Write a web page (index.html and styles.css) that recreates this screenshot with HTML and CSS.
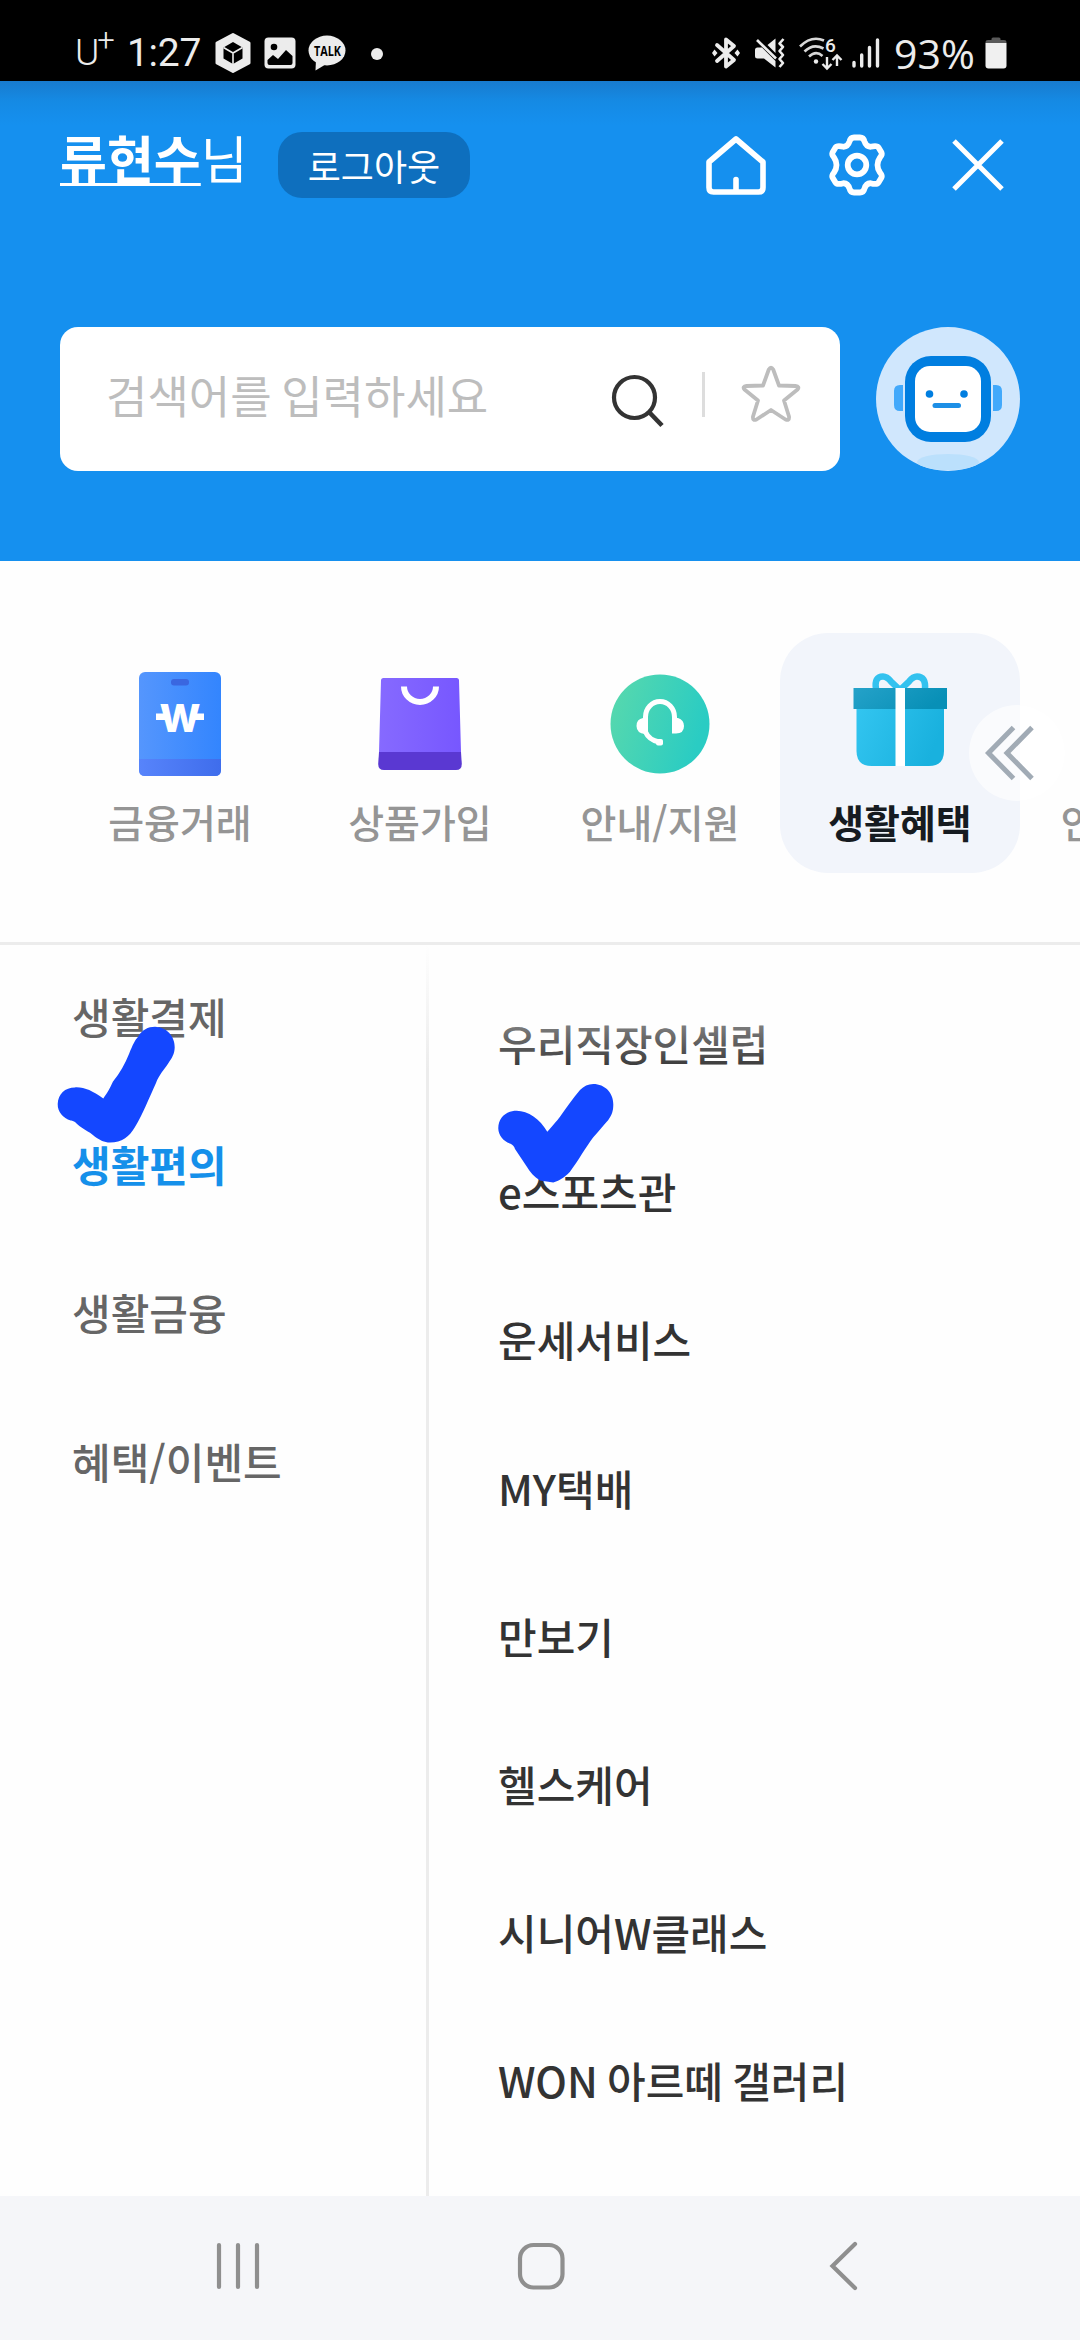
FILE: index.html
```html
<!DOCTYPE html>
<html lang="ko">
<head>
<meta charset="utf-8">
<title>전체메뉴</title>
<link rel="stylesheet" href="styles.css">
</head>
<body>
<div class="screen">
  <div class="status">
    <div class="status-left">
      <span class="carrier">U<span class="plus">+</span></span>
      <span class="time">1:27</span>
      <svg class="st-hex" width="36" height="40" viewBox="0 0 36 40"><path d="M18 1.5 34 10V30L18 38.500 2 30V10Z" fill="#ececec" stroke="#ececec" stroke-width="3" stroke-linejoin="round"/><path d="M18 9 27.500 14.500V25.500L18 31 8.500 25.500V14.500Z"/><path d="M8.500 14.500 18 20 27.500 14.500M18 20V31" stroke="#ececec" stroke-width="1.600" fill="none"/></svg>
      <svg class="st-img" width="32" height="32" viewBox="0 0 32 32"><rect x=".5" y=".5" width="31" height="31" rx="4" fill="#ececec"/><circle cx="10" cy="10" r="3.300"/><path d="M3.500 23 9 18 14 22 22 13 28.500 19V26Q28.500 28 26.500 28H5.500Q3.500 28 3.500 26Z"/></svg>
      <svg class="st-talk" width="38" height="36" viewBox="0 0 38 36"><ellipse cx="19" cy="15.500" rx="18.500" ry="15" fill="#ececec"/><path d="M8 24 7.500 35.500 20 28Z" fill="#ececec"/><text x="6" y="20.500" textLength="27" lengthAdjust="spacingAndGlyphs" class="talk-text">TALK</text></svg>
      <span class="st-dot"></span>
    </div>
    <div class="status-right">
      <svg class="st-bt" width="28" height="32" viewBox="0 0 28 32"><path d="M5 8 22 23 14 29.500V2.500L22 9 5 24" fill="none" stroke="#ececec" stroke-width="3.800" stroke-linejoin="round" stroke-linecap="round"/><path d="M0 16 2.500 12.500 5.500 16 2.500 19.500ZM28 16 25.500 12.500 22.500 16 25.500 19.500Z" fill="#ececec"/></svg>
      <svg class="st-mute" width="30" height="32" viewBox="0 0 30 32"><path d="M0 13Q0 10.500 2.500 10.500H7L20.500 24V30.500L9 21.500H2.500Q0 21.500 0 19ZM12.500 8 20.500 1.500V16Z" fill="#ececec"/><path d="M2 3 21 21.500" stroke="#ececec" stroke-width="2.600"/><path d="M28.500 2 24.500 6.500 28 10 24.500 14 28 18 24.500 22 28 26 24.500 30" fill="none" stroke="#ececec" stroke-width="2.600" stroke-linejoin="round"/></svg>
      <svg class="st-wifi" width="44" height="34" viewBox="0 0 44 34"><g fill="none" stroke="#d8d8d8" stroke-width="2.600"><path d="M1 10.500Q12.500-1 25 4.500"/><path d="M5.500 15.500Q14 7 24.500 12.500"/><path d="M10 20.500Q17 14 23.500 20"/></g><circle cx="17" cy="25.500" r="2.200" fill="#ececec"/><text x="26" y="16" class="wifi-gen">6</text><path d="M28 21V32M23.500 28 28 32.500 32.500 28M38 30V19.500M33.500 24 38 19.500 42.500 24" fill="none" stroke="#ececec" stroke-width="2.400"/></svg>
      <svg class="st-sig" width="28" height="30" viewBox="0 0 28 30"><path d="M2 24.500V28M9.700 17V28M17.500 9.500V28M25.500 2V28" stroke="#ececec" stroke-width="3.400" stroke-linecap="round"/></svg>
      <span class="percent">93%</span>
      <svg class="st-bat" width="22" height="32" viewBox="0 0 22 32"><path d="M.5 6V5Q.5 3 3 3H6.500V2Q6.500 .5 8 .5H14Q15.500 .5 15.500 2V3H19Q21.500 3 21.500 5V6Z" fill="#5a5a5a"/><path d="M.5 6H21.500V28.500Q21.500 31.500 18.500 31.500H3.500Q.5 31.500 .5 28.500Z" fill="#f0f0f0"/></svg>
    </div>
  </div>

  <header class="header">
    <div class="user-row">
      <div class="user"><b>류현수</b>님</div>
      <button class="logout">로그아웃</button>
      <div class="actions">
        <svg width="60" height="60" viewBox="0 0 60 60"><path d="M30 4 3 27V52.500Q3 57 7.500 57H52.500Q57 57 57 52.500V27ZM30 57V44.500" fill="none" stroke="#fff" stroke-width="5.600" stroke-linejoin="round" stroke-linecap="round"/></svg>
        <svg class="ic-gear" width="58" height="62" viewBox="-29 -31 58 62"><g fill="none" stroke="#fff" stroke-width="5.800"><path stroke-linejoin="round" d="M-3-27.500H3Q6.500-27.500 7.500-23.500Q9-18.500 13.500-18.200Q20-20 21.500-17.500L24.500-12.500Q25.500-10.500 23-7.500Q20.500-4 20.500 0Q20.500 4 23 7.500Q25.500 10.500 24.500 12.500L21.500 17.500Q20 20 13.500 18.200Q9 18.500 7.500 23.500Q6.500 27.500 3 27.500H-3Q-6.500 27.500-7.500 23.500Q-9 18.500-13.500 18.200Q-20 20-21.500 17.500L-24.500 12.500Q-25.500 10.500-23 7.500Q-20.500 4-20.500 0Q-20.500-4-23-7.500Q-25.500-10.500-24.500-12.500L-21.500-17.500Q-20-20-13.500-18.200Q-9-18.500-7.500-23.500Q-6.500-27.500-3-27.500Z"/><circle r="9.300"/></g></svg>
        <svg width="52" height="52" viewBox="0 0 52 52"><path d="M2 2 50 50M50 2 2 50" stroke="#fff" stroke-width="5"/></svg>
      </div>
    </div>
    <div class="search-row">
      <div class="search">
        <span class="placeholder">검색어를 입력하세요</span>
        <svg class="ic-search" width="52" height="54" viewBox="0 0 52 54"><circle cx="22.500" cy="23.500" r="20.500" fill="none" stroke="#333" stroke-width="4.200"/><path d="M37 38 50 51.500" stroke="#333" stroke-width="4.600"/></svg>
        <span class="search-div"></span>
        <svg class="ic-star" width="58" height="56" viewBox="0 0 58 56"><path d="M26.800 3.500Q29 0 31.200 3.500L37 19.500 53.500 20Q58 20.500 55.500 23.500L42 34.500 47 50.500Q47.500 55 43.500 53.500L29 44 14.500 53.500Q10.500 55 11 50.500L16 34.500 2.500 23.500Q0 20.500 4.500 20L21 19.500Z" fill="none" stroke="#bdbdbd" stroke-width="3.800" stroke-linejoin="round"/></svg>
      </div>
      <svg class="bot" width="144" height="144" viewBox="0 0 144 144"><defs><clipPath id="c"><circle cx="72" cy="72" r="72"/></clipPath></defs><circle cx="72" cy="72" r="72" fill="#d0e7fd"/><ellipse cx="72" cy="135" rx="31" ry="8" fill="#bbe0fc" clip-path="url(#c)"/><path d="M27 58H24Q18 58 18 64V78Q18 84 24 84H27ZM117 58H120Q126 58 126 64V78Q126 84 120 84H117Z" fill="#42a9fb"/><rect x="29" y="29" width="86" height="86" rx="26" fill="#007ee0"/><rect x="39" y="39" width="66" height="66" rx="15" fill="#fff"/><circle cx="53.500" cy="67" r="3.800" fill="#007ee0"/><circle cx="88" cy="67" r="3.800" fill="#007ee0"/><rect x="56.500" y="76" width="28.500" height="5" rx="2.500" fill="#1d8fe6"/></svg>
    </div>
  </header>

  <nav class="tabs">
    <div class="tab">
      <svg width="120" height="120" viewBox="120 663 120 120"><defs><linearGradient id="g1"><stop offset="0" stop-color="#5596fd"/><stop offset="1" stop-color="#3385fe"/></linearGradient><linearGradient id="g1b"><stop offset="0" stop-color="#5784fb"/><stop offset="1" stop-color="#3f6dec"/></linearGradient></defs><rect x="139" y="672" width="82" height="104" rx="6" fill="url(#g1)"/><path d="M139 759H221V770Q221 776 215 776H145Q139 776 139 770Z" fill="url(#g1b)"/><rect x="171" y="679" width="18" height="6.500" rx="3" fill="#3a67e0"/><path d="M156 713.500H166V720H156ZM194 713.500H204V720H194Z" fill="#fff"/><text x="159.500" y="732" textLength="41" lengthAdjust="spacingAndGlyphs" class="won">W</text></svg>
      <span>금융거래</span>
    </div>
    <div class="tab">
      <svg width="120" height="120" viewBox="360 663 120 120"><defs><linearGradient id="g2"><stop offset="0" stop-color="#866aff"/><stop offset="1" stop-color="#7757ff"/></linearGradient></defs><path d="M383.500 678H456.500Q459 678 459 680.500L461 752H379L381 680.500Q381 678 383.500 678Z" fill="url(#g2)"/><path d="M379 752H461L461.800 764Q461.800 770 456 770H384Q378.200 770 378.200 764Z" fill="#5a38d2"/><path d="M404 686.500A16 15.500 0 0 0 436 686.500" fill="none" stroke="#fff" stroke-width="6"/></svg>
      <span>상품가입</span>
    </div>
    <div class="tab">
      <svg width="120" height="120" viewBox="600 663 120 120"><defs><linearGradient id="g3" x2="1" y2=".3"><stop offset="0" stop-color="#5ad9ac"/><stop offset="1" stop-color="#2accc3"/></linearGradient></defs><circle cx="660" cy="724" r="49.500" fill="url(#g3)"/><path d="M645.500 733V717A14.500 15.500 0 0 1 674.500 717V731M645.500 732Q649 740 659 742" fill="none" stroke="#fff" stroke-width="5"/><path d="M648 718V734H645Q636.500 733 636.500 726Q636.500 719 643 718ZM672 718H678Q684 720 684 726Q684 733.500 676 733.500H672Z" fill="#fff"/><rect x="656" y="739" width="7" height="6.500" rx="2" fill="#fff"/></svg>
      <span>안내/지원</span>
    </div>
    <div class="tab active">
      <svg width="120" height="120" viewBox="840 663 120 120"><defs><linearGradient id="g4" x2="1" y2=".3"><stop offset="0" stop-color="#33c5f0"/><stop offset="1" stop-color="#19b1de"/></linearGradient><linearGradient id="g4b" x2="1" y2=".3"><stop offset="0" stop-color="#25a2c9"/><stop offset="1" stop-color="#0890b7"/></linearGradient></defs><path d="M876 689Q874 676.500 883 676.500Q887 676.500 891 681.500L900 690 909 681.500Q913 676.500 917 676.500Q926 676.500 925 689" fill="none" stroke="#33c2ef" stroke-width="6.500"/><path d="M856.500 707H944V751Q944 766 929 766H871.500Q856.500 766 856.500 751Z" fill="url(#g4)"/><rect x="853.500" y="688" width="93.500" height="21" fill="url(#g4b)"/><rect x="895.500" y="688" width="9.500" height="78" fill="#fff"/></svg>
      <span>생활혜택</span>
    </div>
    <div class="tab">
      <svg width="120" height="120" viewBox="0 0 120 120"></svg>
      <span>인증/보안</span>
    </div>
    <button class="more"><svg width="50" height="56" viewBox="0 0 50 56"><path d="M29.500 2.500 4.500 28 29.500 53.500M48 2.500 23 28 48 53.500" fill="none" stroke="#a1abb5" stroke-width="5"/></svg></button>
  </nav>

  <main class="menu">
    <ul class="groups">
      <li>생활결제</li>
      <li class="on">생활편의</li>
      <li>생활금융</li>
      <li>혜택/이벤트</li>
    </ul>
    <ul class="items">
      <li>우리직장인셀럽</li>
      <li>e스포츠관</li>
      <li>운세서비스</li>
      <li>MY택배</li>
      <li>만보기</li>
      <li>헬스케어</li>
      <li>시니어W클래스</li>
      <li>WON 아르떼 갤러리</li>
    </ul>
    <div class="fade"></div>
    <svg class="mark mark-a" width="120" height="120" viewBox="56 1025 120 120"><path d="M57.700 1104C58 1094 65 1087.400 75 1087.400C85 1087 92 1091 103.300 1098.400C108 1092 110 1088 113 1081.500C120 1073 125 1064 129 1054C133 1044 135 1040 138.300 1036.400C142 1030 148 1026.800 155 1026.800C166 1027 175 1036 174.700 1047.500C174.500 1054 172 1058 168.300 1063.300C164 1070 159 1075 156 1083C149 1098 143 1114 135 1127C129 1137 122 1142.500 110 1142.500C104 1142.500 100 1140 95 1136.700C89 1131 80 1128 75 1122Q72 1120 70.700 1120.500C63 1118 57.500 1112 57.700 1104Z" fill="#1447ff"/></svg>
    <svg class="mark mark-b" width="120" height="102" viewBox="496 1082 120 102"><path d="M498.300 1128.700C498 1118 506 1110.800 516.700 1110.800C528 1110.800 540 1119 547.300 1131.800C553 1125 557 1121 560 1116.700C567 1107 573 1098 580 1090C584 1086 588 1084 593.300 1084C605 1084 613.500 1093 613.300 1104.600C613.300 1111 612 1115 608.300 1120C603 1126 599 1131 593.300 1137.300C586 1147 578 1161 570 1171.800C564 1178 559 1181 553.300 1182.500L540 1180.500C534 1177 530 1172 526.700 1166.600L515 1149Q514 1145 510 1143.500C503 1141 498.500 1135 498.300 1128.700Z" fill="#1447ff"/></svg>
  </main>

  <footer class="navbar">
    <svg width="44" height="50" viewBox="216 2241 44 50"><path d="M219 2245V2287M238 2245V2287M257 2245V2287" stroke="#8f8f8f" stroke-width="4.200" stroke-linecap="round"/></svg>
    <svg class="nav-home" width="50" height="50" viewBox="515 2241 50 50"><rect x="519" y="2245" width="42.500" height="42.500" rx="13.500" fill="none" stroke="#8f8f8f" stroke-width="4.200"/></svg>
    <svg width="30" height="50" viewBox="828 2241 30 50"><path d="M855 2244 832.500 2266 855 2288" fill="none" stroke="#8f8f8f" stroke-width="4.200" stroke-linecap="round"/></svg>
  </footer>
</div>
</body>
</html>
```
FILE: styles.css
```css
* { box-sizing: border-box; }
body { margin: 0; }
ul { margin: 0; padding: 0; list-style: none; }
button { border: 0; padding: 0; margin: 0; font: inherit; }
svg { display: block; flex: none; overflow: visible; }

.screen {
  width: 1080px;
  height: 2340px;
  overflow: hidden;
  display: flex;
  flex-direction: column;
  background: #fefefe;
  font-family: "Noto Sans CJK KR", "Noto Sans", sans-serif;
  white-space: nowrap;
}

/* status bar */
.status {
  flex: none;
  height: 81px;
  padding: 24px 73px 0 75px;
  display: flex;
  justify-content: space-between;
  background: #000;
  color: #ececec;
  font-family: Roboto, sans-serif;
}
.status-left, .status-right { display: flex; align-items: center; height: 58px; }
.carrier { width: 52px; font-size: 37px; font-weight: 300; display: flex; line-height: 44px; }
.plus { font-size: 31px; font-weight: 300; line-height: 20px; margin-left: -2px; }
.time { width: 88px; font-size: 39px; line-height: 44px; letter-spacing: -0.3px; }
.st-img { margin-left: 13px; }
.st-talk { margin-left: 12px; }
.talk-text { font: 700 14px "Open Sans", sans-serif; }
.st-dot { width: 12px; height: 12px; margin: 2px 0 0 25px; border-radius: 50%; background: #ececec; }
.st-mute { margin-left: 15px; }
.st-wifi { margin-left: 14px; }
.wifi-gen { font: 500 19px Roboto, sans-serif; fill: #ececec; }
.st-sig { margin-left: 9px; }
.percent { width: 91px; margin-left: 14px; font-family: "Open Sans", sans-serif; font-size: 41px; line-height: 44px; }

/* header */
.header {
  flex: none;
  height: 480px;
  padding: 50px 60px 0;
  background: linear-gradient(#187bce, #158ae4 20px, #1590ef 44px);
  color: #fff;
}
.user-row { display: flex; align-items: center; height: 68px; }
.user { width: 218px; font-size: 51px; line-height: 68px; font-weight: 400; margin-top: -17px; }
.user b { font-weight: 700; text-decoration: underline; text-decoration-thickness: 3px; text-underline-offset: 4px; }
.logout {
  width: 192px;
  height: 66px;
  border-radius: 24px;
  background: #0e6fbe;
  color: #fff;
  font-size: 36px;
  line-height: 66px;
}
.actions { margin-left: auto; display: flex; align-items: center; gap: 62px; padding-right: 16px; }
.ic-gear { margin-right: 4px; }
.search-row { display: flex; justify-content: space-between; margin-top: 128px; }
.search {
  width: 780px;
  height: 144px;
  padding: 0 39px 0 46px;
  border-radius: 18px;
  display: flex;
  align-items: center;
  background: #fff;
}
.placeholder { width: 506px; color: #bdbdbd; font-size: 45px; font-weight: 400; line-height: 60px; word-spacing: -3px; margin-top: -8px; }
.ic-search { margin-top: 4px; }
.search-div { width: 3px; height: 45px; margin: -9px 37px 0 38px; background: #ddd; }
.ic-star { margin-top: -11px; }

/* category tabs */
.tabs {
  position: relative;
  flex: none;
  height: 384px;
  padding: 72px 0 0 60px;
  display: flex;
  border-bottom: 3px solid #ececec;
  overflow: hidden;
}
.tab {
  flex: none;
  width: 240px;
  height: 240px;
  padding-top: 30px;
  border-radius: 48px;
  display: flex;
  flex-direction: column;
  align-items: center;
  color: #959595;
  font-size: 39px;
  font-weight: 500;
  line-height: 60px;
  gap: 8px;
}
.tab.active { background: #f2f5fb; color: #161b21; font-weight: 700; }
.won { font: 800 38px Inter, sans-serif; fill: #fff; }
.more {
  position: absolute;
  left: 969px;
  top: 144px;
  width: 96px;
  height: 96px;
  padding-left: 15px;
  border-radius: 50%;
  background: rgba(255, 255, 255, .6);
  display: flex;
  align-items: center;
}

/* two-column menu */
.menu { position: relative; flex: 1; display: flex; font-size: 42px; font-weight: 500; }
.menu li { height: 148.2px; line-height: 148.2px; word-spacing: -2.5px; }
.groups { width: 429px; padding-left: 72px; border-right: 3px solid #ececec; color: #666; }
.groups li:first-child { margin-top: -3px; }
.groups .on { color: #1590ea; font-weight: 700; }
.items { padding: 24px 0 0 69px; color: #333; }
.fade {
  position: absolute;
  left: 426px;
  right: 0;
  top: 0;
  height: 126px;
  background: linear-gradient(#fefefe, rgba(254, 254, 254, 0));
}
.mark { position: absolute; }
.mark-a { left: 56px; top: 80px; }
.mark-b { left: 496px; top: 137px; }

/* system navigation */
.navbar {
  flex: none;
  height: 144px;
  padding: 0 222px 4px 216px;
  display: flex;
  align-items: center;
  justify-content: space-between;
  background: #f5f6f9;
}
.nav-home { margin-right: 7px; }
```
